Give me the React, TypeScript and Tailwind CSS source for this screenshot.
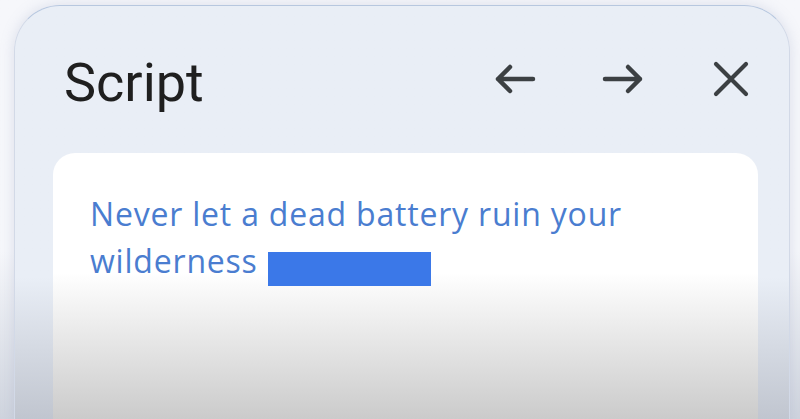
export default function App() {
  return (
    <div className="h-[419px] w-[800px] overflow-hidden bg-linear-to-b from-[#f6f7fb] from-60% to-[#cfd4de] pt-[5px] font-['Roboto',sans-serif]">
      <section className="ml-[14px] flex h-[420px] w-[776px] flex-col rounded-t-[46px] border border-[#d2d9e7] border-t-[#b7c7df] bg-linear-to-b from-[#e9eef6] from-65% to-[#bfc4ce] shadow-[0_0_14px_rgba(140,150,185,0.25)]">
        <header className="flex items-start justify-between pl-[49px] pr-[40px] pt-[50px]">
          <h1 className="text-[54px] leading-none text-[#1f1f1f]">Script</h1>
          <div className="mt-[7px] flex items-start text-[#3c4043]">
            <button aria-label="Previous" className="block">
              <svg width="42" height="32" viewBox="0 0 42 32" fill="none" stroke="currentColor" strokeWidth="4.5" strokeLinecap="round" strokeLinejoin="round">
                <path d="M4 16H39M16 4L4 16L16 28" />
              </svg>
            </button>
            <button aria-label="Next" className="ml-[66px] block">
              <svg width="42" height="32" viewBox="0 0 42 32" fill="none" stroke="currentColor" strokeWidth="4.5" strokeLinecap="round" strokeLinejoin="round">
                <path d="M3 16H38M26 4L38 16L26 28" />
              </svg>
            </button>
            <button aria-label="Close" className="-mt-[2px] ml-[69px] block">
              <svg width="36" height="36" viewBox="0 0 36 36" fill="none" stroke="currentColor" strokeWidth="4.2" strokeLinecap="round">
                <path d="M3 3L33 33M33 3L3 33" />
              </svg>
            </button>
          </div>
        </header>
        <div className="ml-[38px] mt-[43px] h-[266px] w-[705px] rounded-t-[22px] bg-linear-to-b from-white from-45% to-[#cbcbcb] pl-[37px] pr-[37px] pt-[37px]">
          <p className="font-['Open_Sans',sans-serif] text-[32px] font-medium leading-[47px] tracking-[0.8px] text-[#4a7dd0]">
            Never let a dead battery ruin your wilderness{' '}
            <span className="ml-[1px] inline-block h-[34px] w-[163px] bg-[#3b78e8] align-[-13px]" />
          </p>
        </div>
      </section>
    </div>
  );
}
